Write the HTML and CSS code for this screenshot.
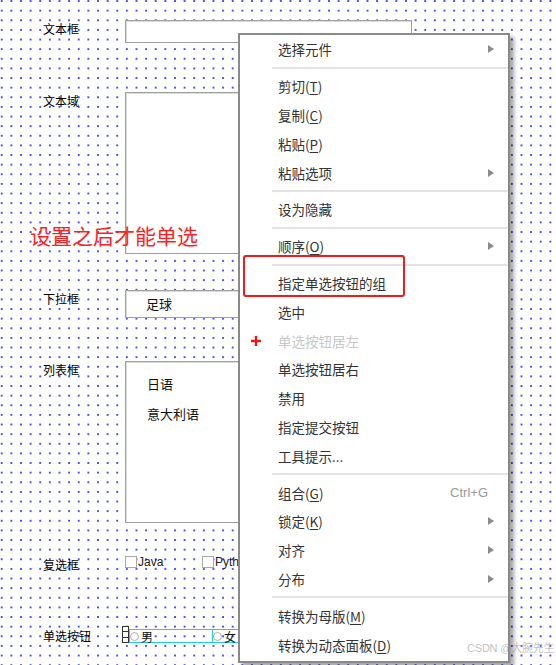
FILE: index.html
```html
<!DOCTYPE html>
<html lang="zh-CN">
<head>
    <meta charset="UTF-8">
    <meta name="viewport" content="width=device-width, initial-scale=1.0">
    <title>单选按钮组</title>
    <link rel="stylesheet" href="styles.css">
</head>
<body>
    <div class="canvas">
        <div class="form">
            <div class="row">
                <span class="lbl">文本框</span>
                <div class="field field-text"></div>
            </div>
            <div class="row row-area">
                <span class="lbl">文本域</span>
                <div class="field field-area"></div>
            </div>
            <div class="row row-select">
                <span class="lbl">下拉框</span>
                <div class="field field-select">足球</div>
            </div>
            <div class="row row-list">
                <span class="lbl">列表框</span>
                <ul class="field field-list">
                    <li>日语</li>
                    <li>意大利语</li>
                </ul>
            </div>
            <div class="row row-check">
                <span class="lbl">复选框</span>
                <div class="checks">
                    <span class="check"><i class="box"></i>Java</span>
                    <span class="check"><i class="box"></i>Python</span>
                </div>
            </div>
            <div class="row row-radio">
                <span class="lbl">单选按钮</span>
                <div class="radios">
                    <span class="handle"><i></i><i></i><i></i></span>
                    <span class="radio radio-first"><i class="dot"></i>男</span>
                    <span class="radio"><i class="dot"></i>女</span>
                </div>
            </div>
        </div>

        <p class="note">设置之后才能单选</p>

        <ul class="menu">
            <li class="item"><span class="ico"></span><span class="txt">选择元件</span><span class="arrow"></span></li>
            <li class="sep"></li>
            <li class="item"><span class="ico"></span><span class="txt">剪切(<u>T</u>)</span></li>
            <li class="item"><span class="ico"></span><span class="txt">复制(<u>C</u>)</span></li>
            <li class="item"><span class="ico"></span><span class="txt">粘贴(<u>P</u>)</span></li>
            <li class="item"><span class="ico"></span><span class="txt">粘贴选项</span><span class="arrow"></span></li>
            <li class="sep"></li>
            <li class="item"><span class="ico"></span><span class="txt">设为隐藏</span></li>
            <li class="sep"></li>
            <li class="item"><span class="ico"></span><span class="txt">顺序(<u>O</u>)</span><span class="arrow"></span></li>
            <li class="sep"></li>
            <li class="item"><span class="ico"></span><span class="txt">指定单选按钮的组</span></li>
            <li class="item"><span class="ico"></span><span class="txt">选中</span></li>
            <li class="item disabled">
                <span class="ico">
                    <svg width="12" height="12" viewBox="0 0 12 12"><path d="M6 1v10M1 6h10" stroke="#e81818" stroke-width="2.4" fill="none"/></svg>
                </span>
                <span class="txt">单选按钮居左</span>
            </li>
            <li class="item"><span class="ico"></span><span class="txt">单选按钮居右</span></li>
            <li class="item"><span class="ico"></span><span class="txt">禁用</span></li>
            <li class="item"><span class="ico"></span><span class="txt">指定提交按钮</span></li>
            <li class="item"><span class="ico"></span><span class="txt">工具提示...</span></li>
            <li class="sep"></li>
            <li class="item"><span class="ico"></span><span class="txt">组合(<u>G</u>)</span><span class="key">Ctrl+G</span></li>
            <li class="item"><span class="ico"></span><span class="txt">锁定(<u>K</u>)</span><span class="arrow"></span></li>
            <li class="item"><span class="ico"></span><span class="txt">对齐</span><span class="arrow"></span></li>
            <li class="item"><span class="ico"></span><span class="txt">分布</span><span class="arrow"></span></li>
            <li class="sep"></li>
            <li class="item"><span class="ico"></span><span class="txt">转换为母版(<u>M</u>)</span></li>
            <li class="item"><span class="ico"></span><span class="txt">转换为动态面板(<u>D</u>)</span></li>
        </ul>

        <div class="mark-box"></div>
        <span class="watermark">CSDN @大腕先生</span>
    </div>
</body>
</html>
```

FILE: styles.css
```css
/* 画布 */
body {
    margin: 0;
    background-color: #fff;
    font-family: "Noto Sans CJK SC", "Noto Sans", sans-serif;
}

.canvas {
    position: relative;
    width: 556px;
    height: 665px;
    overflow: hidden;
    background-color: #fff;
    background-image: radial-gradient(circle, #0000ff 0 0.65px, transparent 0.75px);
    background-size: 9.64px 9.64px;
    background-position: -3.1px -3.8px;
}

/* 表单元件 */
.form {
    display: flex;
    flex-direction: column;
    padding: 20px 0 0 43px;
}

.row {
    display: flex;
    align-items: flex-start;
}

.lbl {
    width: 82px;
    flex-shrink: 0;
    font-size: 12px;
    line-height: 18px;
    color: #000;
}

.field {
    box-sizing: border-box;
    width: 287px;
    margin: 0;
    background-color: #fff;
    border: 1px solid #a0a0a0;
    box-shadow: inset 1px 1px 0 #dcdcdc;
}

.field-text {
    height: 23px;
}

.row-area {
    margin-top: 49px;
}

.field-area {
    height: 162px;
}

.row-select {
    margin-top: 36px;
}

.field-select {
    height: 28px;
    padding-left: 20px;
    font-size: 13px;
    line-height: 26px;
    color: #111;
}

.row-list {
    margin-top: 43px;
}

.field-list {
    height: 162px;
    list-style: none;
    padding: 7px 0 0 21px;
}

.field-list li {
    font-size: 13px;
    line-height: 30px;
    color: #111;
}

.row-check {
    margin-top: 30px;
    height: 18px;
    align-items: center;
}

.row-check .lbl {
    margin-top: 5px;
}

.checks {
    display: flex;
    align-items: center;
}

.check {
    display: flex;
    align-items: center;
    width: 77px;
    font-family: "Liberation Sans", Arial, sans-serif;
    font-size: 12px;
    color: #222;
}

.box {
    box-sizing: border-box;
    width: 12px;
    height: 12px;
    margin-right: 1px;
    background-color: #fff;
    border: 1px solid #a8a8a8;
}

.row-radio {
    margin-top: 56px;
    height: 18px;
    align-items: center;
}

.radios {
    display: flex;
    align-items: center;
    margin-left: -3px;
}

.handle {
    display: flex;
    flex-direction: column;
    box-sizing: border-box;
    width: 7px;
    height: 17px;
    margin-top: -3px;
    border: 1px solid #333;
    background-color: #fff;
}

.handle i {
    flex: 1;
    border-bottom: 1px solid #333;
}

.handle i:last-child {
    border-bottom: none;
}

.radio {
    display: flex;
    align-items: center;
    box-sizing: border-box;
    width: 120px;
    height: 14px;
    border: 1px solid #1ed0d8;
    font-size: 12px;
    color: #111;
}

.radio-first {
    width: 83px;
    border-right: none;
}

.dot {
    box-sizing: border-box;
    width: 9px;
    height: 9px;
    margin-right: 2px;
    border: 1px solid #b0b0b0;
    border-radius: 50%;
    background-color: #fff;
}

/* 标注 */
.note {
    position: absolute;
    left: 30px;
    top: 225px;
    margin: 0;
    font-size: 21px;
    line-height: 21px;
    color: #ff1f1f;
}

.mark-box {
    position: absolute;
    left: 243px;
    top: 255px;
    width: 162px;
    height: 42px;
    box-sizing: border-box;
    border: 2px solid #f01c1c;
    border-radius: 3px;
}

.watermark {
    position: absolute;
    left: 467px;
    top: 640px;
    font-family: "Liberation Sans", "Noto Sans CJK SC", sans-serif;
    font-size: 11px;
    line-height: 16px;
    letter-spacing: -0.2px;
    white-space: nowrap;
    color: rgba(150, 150, 150, 0.6);
}

/* 右键菜单 */
.menu {
    position: absolute;
    left: 238px;
    top: 33px;
    width: 272px;
    box-sizing: border-box;
    margin: 0;
    padding: 0 0 2px;
    list-style: none;
    background-color: #fff;
    border: 2px solid #8a8a8a;
    box-shadow: 4px 4px 4px rgba(0, 0, 0, 0.35);
}

.item {
    display: flex;
    align-items: center;
    height: 28.8px;
    font-size: 13.5px;
    color: #333;
}

.ico {
    display: flex;
    align-items: center;
    justify-content: center;
    width: 32px;
    flex-shrink: 0;
}

.txt {
    flex: 1;
    padding-left: 6px;
}

.txt u {
    text-decoration-thickness: 1px;
    text-underline-offset: 2px;
}

.disabled {
    color: #c8c8c8;
}

.arrow {
    width: 0;
    height: 0;
    margin-right: 14px;
    border-left: 6px solid #8c8c8c;
    border-top: 4px solid transparent;
    border-bottom: 4px solid transparent;
}

.key {
    margin-right: 20px;
    font-family: "Liberation Sans", Arial, sans-serif;
    font-size: 13px;
    color: #999;
}

.sep {
    height: 8px;
    margin-left: 32px;
    background: linear-gradient(#e4e4e4, #e4e4e4) center / 100% 2px no-repeat;
}
```
